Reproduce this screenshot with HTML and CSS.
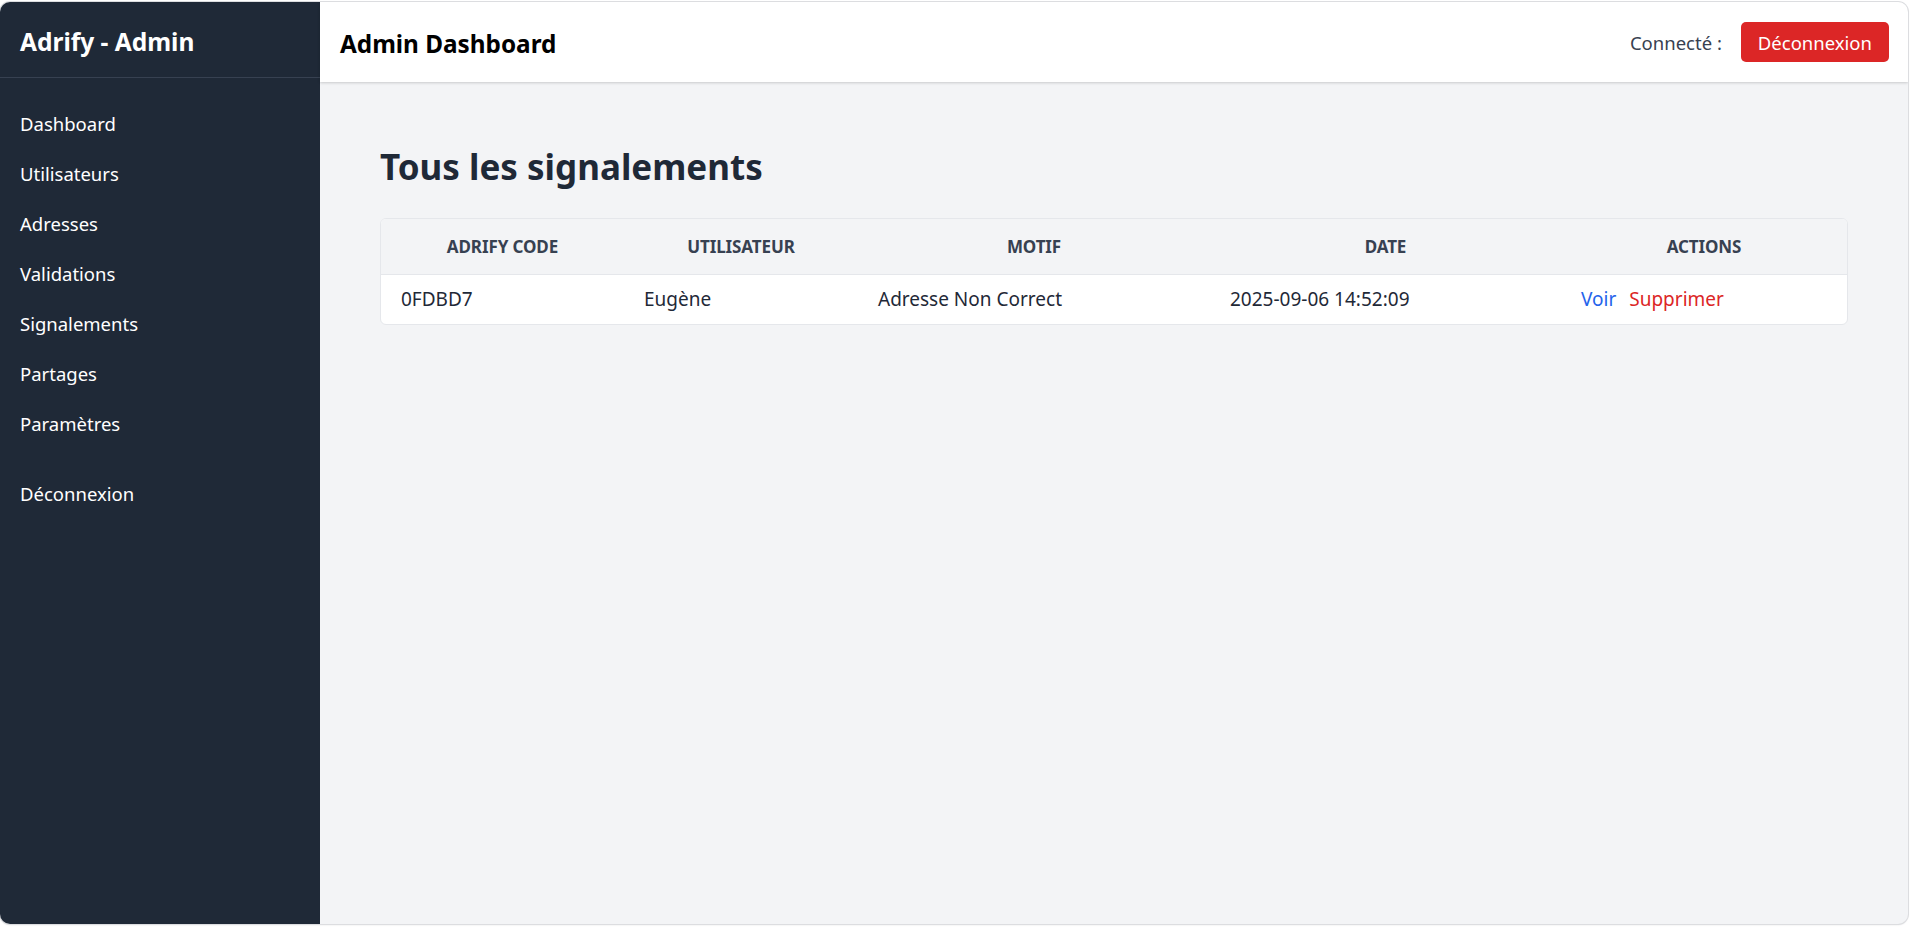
FILE: index.html
```html
<!DOCTYPE html>
<html lang="fr">
<head>
<meta charset="utf-8">
<title>Adrify - Admin</title>
<link rel="stylesheet" href="styles.css">
</head>
<body>
<div class="window">
  <aside class="sidebar">
    <div class="brand">Adrify - Admin</div>
    <nav class="nav">
      <a class="nav-link" href="#">Dashboard</a>
      <a class="nav-link" href="#">Utilisateurs</a>
      <a class="nav-link" href="#">Adresses</a>
      <a class="nav-link" href="#">Validations</a>
      <a class="nav-link" href="#">Signalements</a>
      <a class="nav-link" href="#">Partages</a>
      <a class="nav-link" href="#">Paramètres</a>
      <a class="nav-link nav-logout" href="#">Déconnexion</a>
    </nav>
  </aside>
  <div class="content">
    <header class="topbar">
      <div class="topbar-title">Admin Dashboard</div>
      <div class="topbar-right">
        <span class="connected">Connecté :</span>
        <button class="btn-logout">Déconnexion</button>
      </div>
    </header>
    <main class="main">
      <h1 class="page-title">Tous les signalements</h1>
      <div class="table-wrap">
        <table class="table">
          <colgroup>
            <col class="col-code"><col class="col-user"><col class="col-motif"><col class="col-date"><col class="col-actions">
          </colgroup>
          <thead>
            <tr>
              <th>Adrify Code</th>
              <th>Utilisateur</th>
              <th>Motif</th>
              <th>Date</th>
              <th>Actions</th>
            </tr>
          </thead>
          <tbody>
            <tr>
              <td>0FDBD7</td>
              <td>Eugène</td>
              <td>Adresse Non Correct</td>
              <td>2025-09-06 14:52:09</td>
              <td><a class="link-view" href="#">Voir</a><a class="link-delete" href="#">Supprimer</a></td>
            </tr>
          </tbody>
        </table>
      </div>
    </main>
  </div>
</div>
</body>
</html>
```

FILE: styles.css
```css
* { box-sizing: border-box; }
html, body { height: 100%; }
body {
  margin: 0;
  background: #ffffff;
  font-family: "Noto Sans", "Open Sans", sans-serif;
}
.window {
  margin: 2px 2px 0 0;
  height: 922px;
  display: flex;
  border-radius: 10px;
  overflow: hidden;
  box-shadow: 0 0 0 1px #dcdde0, 0 1px 2px rgba(0,0,0,0.12);
  background: #f3f4f6;
}
.sidebar {
  width: 320px;
  flex-shrink: 0;
  background: #1f2937;
  color: #ffffff;
}
.brand {
  height: 76px;
  padding: 3px 20px 0 20px;
  display: flex;
  align-items: center;
  font-size: 24.5px;
  font-weight: 700;
  border-bottom: 1px solid #374151;
}
.nav {
  display: flex;
  flex-direction: column;
  padding-top: 21px;
}
.nav-link {
  display: block;
  height: 50px;
  line-height: 50px;
  padding: 0 20px;
  color: #ffffff;
  text-decoration: none;
  font-size: 18.5px;
}
.nav-logout { margin-top: 20px; }
.content {
  flex: 1;
  display: flex;
  flex-direction: column;
  min-width: 0;
}
.topbar {
  height: 80px;
  background: #ffffff;
  display: flex;
  align-items: center;
  justify-content: space-between;
  padding: 0 19px 0 20px;
  box-shadow: 0 1px 3px rgba(0,0,0,0.12), 0 1px 2px rgba(0,0,0,0.06);
  position: relative;
  z-index: 1;
}
.topbar-title {
  font-size: 24.3px;
  font-weight: 700;
  color: #000000;
  padding-top: 2px;
}
.topbar-right {
  display: flex;
  align-items: center;
}
.connected {
  color: #374151;
  font-size: 18.5px;
  margin-right: 19px;
}
.btn-logout {
  background: #dc2626;
  color: #ffffff;
  border: none;
  border-radius: 5px;
  height: 40px;
  padding: 0 17px;
  font-family: inherit;
  font-size: 18.5px;
}
.main {
  flex: 1;
  padding: 60px 60px;
}
.page-title {
  margin: 0 0 26px 0;
  font-size: 35px;
  line-height: 50px;
  font-weight: 700;
  color: #1f2937;
}
.table-wrap {
  background: #ffffff;
  border: 1px solid #e5e7eb;
  border-radius: 6px;
  overflow: hidden;
}
.table {
  width: 100%;
  border-collapse: collapse;
  table-layout: fixed;
}
.col-code { width: 243px; }
.col-user { width: 234px; }
.col-motif { width: 352px; }
.col-date { width: 351px; }
.col-actions { width: auto; }
.table th {
  background: #f3f4f6;
  color: #374151;
  font-size: 17px;
  font-weight: 700;
  text-transform: uppercase;
  text-align: center;
  height: 55px;
  padding: 0 20px;
  border-bottom: 1px solid #e5e7eb;
  letter-spacing: -0.1px;
}
.table td {
  text-align: left;
  height: 50px;
  padding: 0 20px;
  color: #1f2937;
  font-size: 19px;
}
.link-view {
  color: #2563eb;
  text-decoration: none;
  margin-right: 13px;
}
.link-delete {
  color: #dc2626;
  text-decoration: none;
}
```
